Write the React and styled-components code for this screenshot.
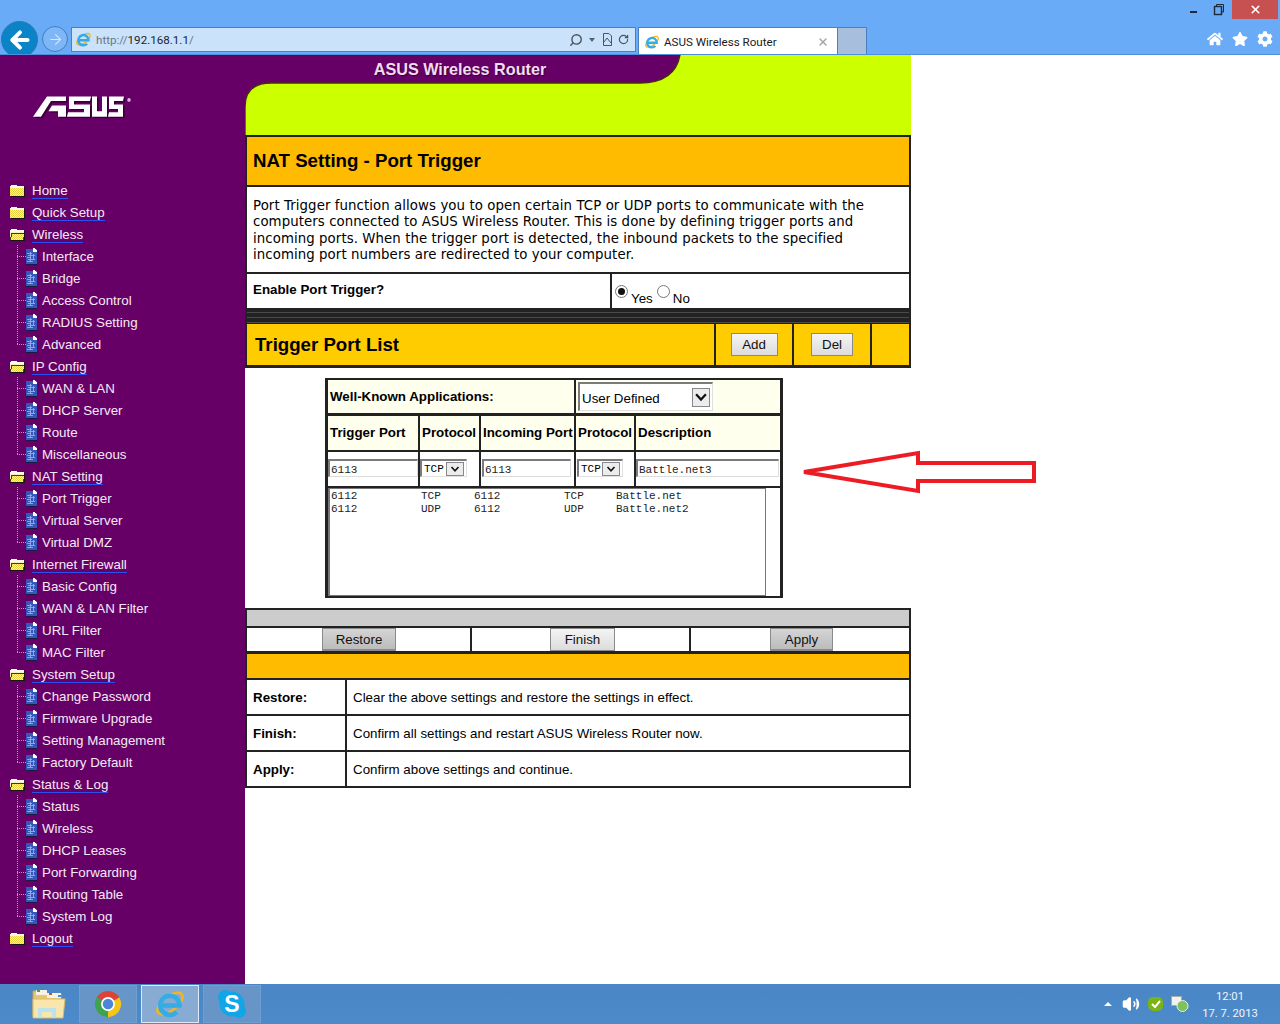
import styled, { createGlobalStyle } from 'styled-components';
import { ArrowLeft, ArrowRight, Search, RotateCw, X, Volume2 } from 'lucide-react';
import { FaHome, FaStar, FaCog } from 'react-icons/fa';

const GlobalStyle = createGlobalStyle`
  html, body {
    margin: 0;
    background: #fff;
    overflow: hidden;
  }
  * {
    box-sizing: border-box;
  }
`;

const Page = styled.div`
  position: relative;
  width: 1280px;
  height: 1024px;
  display: flex;
  flex-direction: column;
  overflow: hidden;
  font-family: 'Liberation Sans', Arial, sans-serif;
  font-size: 13.33px;
  color: #000;
`;

/* browser chrome */
const Chrome = styled.header`
  height: 55px;
  flex: none;
  background: #6aabf7;
  border-bottom: 1px solid #4d8fd8;
  overflow: hidden;
`;
const WindowBar = styled.div`
  height: 21px;
  display: flex;
  justify-content: flex-end;
  align-items: flex-start;
  padding-right: 2px;
`;
const WinButton = styled.div`
  width: ${(p) => p.$w}px;
  height: 19px;
  display: flex;
  align-items: center;
  justify-content: center;
  background: ${(p) => p.$bg || 'transparent'};
  color: #fff;
`;
const Minimize = styled.span`
  width: 7px;
  height: 2px;
  margin-top: 5px;
  background: #1c2a3a;
`;
const NavBar = styled.div`
  display: flex;
  align-items: flex-start;
  padding-left: 1px;
`;
const BackButton = styled.div`
  width: 37px;
  height: 37px;
  border-radius: 50%;
  background: #0a84c6;
  border: 1px solid #2f78b8;
  display: flex;
  align-items: center;
  justify-content: center;
  color: #fff;
`;
const ForwardButton = styled.div`
  width: 26px;
  height: 26px;
  margin: 5px 3px 0 4px;
  border-radius: 50%;
  background: #7fb6f5;
  border: 1px solid #3f7fc0;
  display: flex;
  align-items: center;
  justify-content: center;
  color: #d5e6fa;
`;
const AddressBar = styled.div`
  width: 565px;
  height: 25px;
  margin-top: 6px;
  display: flex;
  align-items: center;
  gap: 4px;
  padding: 0 6px 0 3px;
  background: #cbe2fb;
  border: 1px solid #4a80bd;
  font-family: Roboto, 'Liberation Sans', sans-serif;
  font-size: 11.6px;
  color: #6a7682;
`;
const Url = styled.span`
  flex: 1;
  b {
    font-weight: 400;
    color: #1a2530;
  }
`;
const AddressTool = styled.span`
  display: flex;
  align-items: center;
  color: #4a5560;
  margin-left: ${(p) => p.$gap || 0}px;
`;
const Caret = styled.span`
  width: 0;
  height: 0;
  border: 3px solid transparent;
  border-top: 4px solid #56616c;
  border-bottom: 0;
`;
const Tab = styled.div`
  width: 200px;
  height: 28px;
  margin: 6px 0 0 2px;
  display: flex;
  align-items: center;
  gap: 4px;
  padding: 0 8px 0 5px;
  background: #fff;
  border: 1px solid #4a80bd;
  border-bottom: 0;
  font-family: Roboto, 'Liberation Sans', sans-serif;
  font-size: 11.6px;
  color: #1a1a1a;
  span {
    flex: 1;
  }
`;
const NewTab = styled.div`
  width: 29px;
  height: 28px;
  margin-top: 6px;
  background: #a7bfdc;
  border: 1px solid #4a80bd;
  border-width: 1px 1px 0 0;
`;
const ToolIcons = styled.div`
  margin: 10px 7px 0 auto;
  display: flex;
  align-items: center;
  gap: 9px;
  color: #fff;
`;

/* page body */
const Main = styled.div`
  flex: 1;
  display: flex;
  min-height: 0;
`;
const Sidebar = styled.nav`
  width: 245px;
  flex: none;
  background: #660066;
`;
const LogoBox = styled.div`
  height: 124px;
  padding: 41px 0 0 33px;
`;
const NavRow = styled.div`
  height: 22px;
  display: flex;
  align-items: center;
  padding-left: ${(p) => (p.$child ? 17 : 9)}px;
  gap: ${(p) => (p.$child ? 5 : 6)}px;
  color: #f6e9f6;
  white-space: nowrap;
`;
const ParentLink = styled.a`
  margin-top: 2px;
  color: #f6e9f6;
  line-height: 15px;
  border-bottom: 1px solid #2a50f0;
`;

const Content = styled.main`
  width: 666px;
  flex: none;
`;
const Banner = styled.div`
  position: relative;
  height: 80px;
  svg {
    display: block;
  }
`;
const BannerTitle = styled.div`
  position: absolute;
  top: 5px;
  left: 0;
  width: 430px;
  text-align: center;
  font-size: 16.2px;
  font-weight: 700;
  color: #f2dcf2;
  text-shadow: 1px 1px 1px #3a003a;
`;
const Panel = styled.section`
  border: 2px solid #222;
  border-bottom: 0;
`;
const TitleRow = styled.div`
  height: 50px;
  display: flex;
  align-items: center;
  padding-left: 6px;
  background: #ffbb00;
  border-bottom: 2px solid #222;
  font-size: 18.67px;
  font-weight: 700;
`;
const Description = styled.p`
  height: 87px;
  margin: 0;
  padding: 11px 6px 0;
  border-bottom: 2px solid #222;
  font-family: 'DejaVu Sans', Verdana, sans-serif;
  font-size: 13.33px;
  line-height: 16.3px;
  letter-spacing: 0.07px;
  white-space: nowrap;
`;
const EnableRow = styled.div`
  height: 34px;
  display: grid;
  grid-template-columns: 365px 1fr;
`;
const EnableLabel = styled.div`
  padding: 8px 0 0 6px;
  border-right: 2px solid #222;
  font-weight: 700;
`;
const EnableOptions = styled.div`
  display: flex;
  align-items: flex-start;
  padding: 11px 0 0 3px;
`;
const Radio = styled.input.attrs({ type: 'radio', readOnly: true })`
  appearance: none;
  width: 13px;
  height: 13px;
  margin: 0 3px 0 ${(p) => p.$gap || 0}px;
  border: 1px solid #777;
  border-radius: 50%;
  background: #fff;
  display: flex;
  align-items: center;
  justify-content: center;
  &:checked::after {
    content: '';
    width: 7px;
    height: 7px;
    border-radius: 50%;
    background: #111;
  }
`;
const RadioText = styled.span`
  margin-top: 6px;
`;
const Stripes = styled.div`
  height: 16px;
  background: repeating-linear-gradient(#222 0 4px, #4a4a4a 4px 5px);
`;
const ListHeader = styled.div`
  height: 44px;
  display: grid;
  grid-template-columns: 467px 78px 78px 1fr;
  background: #ffcc00;
  border-bottom: 3px solid #222;
`;
const HeaderCell = styled.div`
  display: flex;
  align-items: center;
  justify-content: ${(p) => (p.$title ? 'flex-start' : 'center')};
  padding-left: ${(p) => (p.$title ? 8 : 0)}px;
  border-left: ${(p) => (p.$title ? 0 : 2)}px solid #222;
  font-size: ${(p) => (p.$title ? 18.67 : 13.33)}px;
  font-weight: ${(p) => (p.$title ? 700 : 400)};
`;
const FormButton = styled.button`
  height: ${(p) => p.$h}px;
  width: ${(p) => p.$w}px;
  padding: 0;
  font: 13.33px 'Liberation Sans', Arial, sans-serif;
  color: #111;
  border: 1px solid #8a8a8a;
  border-bottom-width: ${(p) => (p.$dark ? 2 : 1)}px;
  background: ${(p) =>
    p.$dark
      ? 'linear-gradient(#d4d4d4, #bcbcbc)'
      : 'linear-gradient(#f4f4f4, #dcdcdc)'};
`;

const PortTable = styled.div`
  width: 458px;
  margin: 10px 0 0 80px;
  display: grid;
  grid-template-columns: 92px 61px 95px 60px 144px;
  border: 3px solid #222;
  border-top-width: 2px;
  border-bottom-width: 2px;
`;
const Cell = styled.div`
  grid-column: span ${(p) => p.$span || 1};
  height: ${(p) => p.$h}px;
  display: flex;
  align-items: center;
  padding-left: ${(p) => p.$pad ?? 2}px;
  padding-bottom: ${(p) => p.$lift || 0}px;
  background: ${(p) => p.$bg || '#fff'};
  border-right: ${(p) => (p.$last ? 0 : 2)}px solid #222;
  border-bottom: ${(p) => p.$under || 2}px solid #222;
  font-weight: ${(p) => (p.$bold ? 700 : 400)};
  white-space: nowrap;
`;
const TextBox = styled.input.attrs({ readOnly: true })`
  width: ${(p) => p.$w}px;
  height: 18px;
  margin-top: -2px;
  padding: 2px 0 0 1px;
  font: 11px 'Liberation Mono', monospace;
  color: #222;
  background: #fff;
  border: 1px solid #dcdcdc;
  border-top: 2px solid #7b7b7b;
  border-left: 2px solid #7b7b7b;
  outline: none;
`;
const SelectBox = styled.div`
  width: ${(p) => p.$w}px;
  height: ${(p) => p.$h}px;
  margin-top: ${(p) => p.$top || 0}px;
  display: flex;
  align-items: center;
  justify-content: space-between;
  padding: 0 2px 0 2px;
  background: #fff;
  border: 1px solid #e0e0e0;
  border-top: 2px solid #7b7b7b;
  border-left: 2px solid #7b7b7b;
  font: ${(p) => (p.$mono ? "11px 'Liberation Mono', monospace" : "13.33px 'Liberation Sans', Arial, sans-serif")};
`;
const SelectLabel = styled.span`
  margin-top: 2px;
`;
const SelectArrow = styled.span`
  width: ${(p) => p.$w}px;
  height: ${(p) => p.$h}px;
  display: flex;
  align-items: center;
  justify-content: center;
  background: #ececec;
  border: 1px solid #888;
`;
const ListBox = styled.div`
  grid-column: span 5;
  height: 108px;
  width: 438px;
  padding-top: 1px;
  border: 1px solid #777;
  border-left-width: 2px;
  font: 11px/13px 'Liberation Mono', monospace;
  color: #222;
  display: flex;
  flex-direction: column;
`;
const ListRow = styled.div`
  display: grid;
  grid-template-columns: 90px 53px 90px 52px 1fr;
  padding-left: 1px;
`;

const BottomPanel = styled.section`
  margin-top: 10px;
  border: 2px solid #222;
  border-top-width: 2px;
`;
const GrayBar = styled.div`
  height: 18px;
  background: #cccccc;
  border-bottom: 2px solid #222;
`;
const ButtonRow = styled.div`
  height: 26px;
  display: grid;
  grid-template-columns: 223px 219px 1fr;
  border-bottom: 3px solid #222;
`;
const ButtonCell = styled.div`
  padding-left: ${(p) => p.$pad}px;
  border-left: ${(p) => (p.$first ? 0 : 2)}px solid #222;
`;
const OrangeBar = styled.div`
  height: 26px;
  background: #ffbb00;
  border-bottom: 2px solid #222;
`;
const HelpRow = styled.div`
  height: ${(p) => (p.$last ? 34 : 36)}px;
  display: grid;
  grid-template-columns: 100px 1fr;
  border-bottom: ${(p) => (p.$last ? 0 : 2)}px solid #222;
`;
const HelpLabel = styled.div`
  display: flex;
  align-items: center;
  padding-left: 6px;
  border-right: 2px solid #222;
  font-weight: 700;
`;
const HelpText = styled.div`
  display: flex;
  align-items: center;
  padding-left: 6px;
`;

const Annotation = styled.svg`
  position: absolute;
  left: 800px;
  top: 448px;
`;

/* taskbar */
const Taskbar = styled.footer`
  height: 40px;
  flex: none;
  display: flex;
  align-items: center;
  background: linear-gradient(#4a86c6, #4c8aca);
  padding-left: 22px;
`;
const TaskItem = styled.div`
  width: ${(p) => (p.$plain ? 53 : 58)}px;
  height: 38px;
  margin-right: 4px;
  display: flex;
  align-items: center;
  justify-content: center;
  border: 1px solid ${(p) => (p.$active ? '#dfeaf6' : p.$plain ? 'transparent' : '#6f9fd2')};
  background: ${(p) => (p.$active ? '#87abd2' : p.$plain ? 'transparent' : '#6795c8')};
`;
const Tray = styled.div`
  margin-left: auto;
  display: flex;
  align-items: center;
  color: #fff;
`;
const TrayTriangle = styled.span`
  width: 0;
  height: 0;
  margin-right: 10px;
  border: 4px solid transparent;
  border-bottom: 4px solid #fff;
  border-top: 0;
`;
const Clock = styled.div`
  width: 76px;
  margin: 0 12px 0 3px;
  padding-top: 1px;
  text-align: center;
  font-family: Roboto, 'Liberation Sans', sans-serif;
  font-size: 11.2px;
  line-height: 17px;
  color: #f2f6fb;
`;

function IeIcon({ size = 16 }) {
  return (
    <svg width={size} height={size} viewBox="0 0 32 32" style={{ flex: 'none' }}>
      <ellipse cx="16" cy="15.5" rx="15" ry="7" fill="none" stroke="#f3b51c" strokeWidth="2.6" transform="rotate(-38 16 15.5)" />
      <path d="M7 17.5H25.5A9.6 9.6 0 1 0 22.8 24" fill="none" stroke="#35ace6" strokeWidth="4.6" />
    </svg>
  );
}

function Folder({ open }) {
  return (
    <svg width="17" height="14" viewBox="0 0 17 14" shapeRendering="crispEdges">
      <defs>
        <pattern id="dither" width="2" height="2" patternUnits="userSpaceOnUse">
          <rect width="2" height="2" fill="#ffff66" />
          <rect width="1" height="1" fill="#e8d040" />
          <rect x="1" y="1" width="1" height="1" fill="#e8d040" />
        </pattern>
      </defs>
      <path d="M2 2H7L8 3H15V13H1V3Z" fill={open ? '#f4eed0' : 'url(#dither)'} />
      <path d="M2 2H7L8 3H15V5H1V3Z" fill="#fffbe8" />
      {open && <path d="M1 13L3 6H16L14 13Z" fill="url(#dither)" stroke="#111" strokeWidth="0.8" />}
      <path d="M15.5 4V13.5H2" fill="none" stroke="#161616" strokeWidth="1" />
    </svg>
  );
}

function TreeDoc({ last }) {
  return (
    <svg width="20" height="22" viewBox="0 0 20 22" style={{ flex: 'none' }} shapeRendering="crispEdges">
      <path d={`M0.5 0V${last ? 11 : 22}M0 11.5H9`} stroke="#b49ab4" strokeDasharray="1 1" fill="none" />
      <rect x="9" y="4" width="11" height="15" fill="#3558b8" />
      <path d="M10 8H15M11 10H18M10 12H14M11 14H18M10 16H16M13 7V17M16 9V15" stroke="#9fb4ea" strokeWidth="0.8" fill="none" />
      <path d="M16 3H17L20 6V7H16Z" fill="#fff" />
      <path d="M9 19H20" stroke="#1a1a40" />
    </svg>
  );
}

const ASUS_MARK = [
  'M0 19L14 1H33V5H18L8 19Z',
  'M19 9H33V19H25V14H15.5Z',
  'M36 1H58L57 5H41V8H57V19H34L35 15H51V12H36Z',
  'M59 1H64V14H69V1H74V19H59Z',
  'M76 1H91L90 5H81V8H90V19H75L76 15H85V12H76Z',
];

function AsusLogo() {
  return (
    <svg width="100" height="22" viewBox="0 0.5 100 19.5" preserveAspectRatio="none">
      <path d={ASUS_MARK.join(' ')} fill="#330033" transform="translate(1.5 1.2)" />
      <path d={ASUS_MARK.join(' ')} fill="#fff" />
      <circle cx="96" cy="4" r="1.7" fill="#d9b8d9" />
    </svg>
  );
}

function ChromeLogo() {
  return (
    <svg width="30" height="30" viewBox="0 0 32 32">
      <path d="M16 16L3.88 9A14 14 0 0 1 28.12 9Z" fill="#dc4437" />
      <path d="M16 16L28.12 9A14 14 0 0 1 16 30Z" fill="#f5c518" />
      <path d="M16 16L16 30A14 14 0 0 1 3.88 9Z" fill="#3ea34f" />
      <circle cx="16" cy="16" r="7.4" fill="#fff" />
      <circle cx="16" cy="16" r="5.6" fill="#4d86d8" />
    </svg>
  );
}

function ExplorerIcon() {
  return (
    <svg width="34" height="30" viewBox="0 0 34 30">
      <path d="M1 2H13L15 5H29V27H1Z" fill="#e9c66c" stroke="#c4a050" />
      <rect x="4" y="1" width="11" height="5" fill="#f6f3e6" />
      <rect x="5" y="1" width="3" height="2" fill="#3ca54c" />
      <rect x="15" y="4" width="14" height="5" fill="#f6f3e6" />
      <rect x="17" y="4" width="3" height="2" fill="#d84a3a" />
      <rect x="26" y="6" width="3" height="2" fill="#4a8ad8" />
      <path d="M1 10H33L31 29H1Z" fill="#f8e6ac" stroke="#d8bc70" />
      <path d="M6 29V19H24V29H20V23H10V29Z" fill="#b5e2f2" opacity="0.9" />
    </svg>
  );
}

function SkypeIcon() {
  return (
    <svg width="30" height="30" viewBox="0 0 30 30">
      <circle cx="8" cy="8" r="7" fill="#12a5e8" />
      <circle cx="22" cy="22" r="7" fill="#12a5e8" />
      <circle cx="15" cy="15" r="12.5" fill="#12a5e8" />
      <text x="15" y="23" textAnchor="middle" fontFamily="Liberation Sans" fontWeight="700" fontSize="23" fill="#fff">S</text>
    </svg>
  );
}

function Chevron({ size = 10 }) {
  return (
    <svg width={size} height={size} viewBox="0 0 10 10">
      <path d="M1.5 3L5 6.8L8.5 3" fill="none" stroke="#111" strokeWidth="1.6" />
    </svg>
  );
}

const MENU = [
  { label: 'Home' },
  { label: 'Quick Setup' },
  { label: 'Wireless', items: ['Interface', 'Bridge', 'Access Control', 'RADIUS Setting', 'Advanced'] },
  { label: 'IP Config', items: ['WAN & LAN', 'DHCP Server', 'Route', 'Miscellaneous'] },
  { label: 'NAT Setting', items: ['Port Trigger', 'Virtual Server', 'Virtual DMZ'] },
  { label: 'Internet Firewall', items: ['Basic Config', 'WAN & LAN Filter', 'URL Filter', 'MAC Filter'] },
  { label: 'System Setup', items: ['Change Password', 'Firmware Upgrade', 'Setting Management', 'Factory Default'] },
  { label: 'Status & Log', items: ['Status', 'Wireless', 'DHCP Leases', 'Port Forwarding', 'Routing Table', 'System Log'] },
  { label: 'Logout' },
];

const PORTS = [
  ['6112', 'TCP', '6112', 'TCP', 'Battle.net'],
  ['6112', 'UDP', '6112', 'UDP', 'Battle.net2'],
];

const HELP = [
  ['Restore:', 'Clear the above settings and restore the settings in effect.'],
  ['Finish:', 'Confirm all settings and restart ASUS Wireless Router now.'],
  ['Apply:', 'Confirm above settings and continue.'],
];

const CREAM = '#ffffee';

export default function App() {
  return (
    <Page>
      <GlobalStyle />
      <Chrome>
        <WindowBar>
          <WinButton $w={26}>
            <Minimize />
          </WinButton>
          <WinButton $w={26}>
            <svg width="12" height="12" viewBox="0 0 12 12">
              <path d="M3.5 2.5V0.5H10.5V8H8.5" fill="none" stroke="#1c2a3a" />
              <rect x="1.5" y="2.5" width="7" height="8" fill="none" stroke="#1c2a3a" strokeWidth="1.4" />
            </svg>
          </WinButton>
          <WinButton $w={46} $bg="#c75050">
            <X size={13} strokeWidth={3} />
          </WinButton>
        </WindowBar>
        <NavBar>
          <BackButton>
            <ArrowLeft size={26} strokeWidth={3.6} />
          </BackButton>
          <ForwardButton>
            <ArrowRight size={17} strokeWidth={1.5} />
          </ForwardButton>
          <AddressBar>
            <IeIcon size={17} />
            <Url>
              http://<b>192.168.1.1</b>/
            </Url>
            <AddressTool>
              <Search size={14} strokeWidth={2.4} style={{ transform: 'scaleX(-1)' }} />
            </AddressTool>
            <AddressTool $gap={2}>
              <Caret />
            </AddressTool>
            <AddressTool $gap={4}>
              <svg width="9" height="13" viewBox="0 0 9 13">
                <path d="M0.5 0.5H6L8.5 3V12.5H0.5Z M1 9L4 5L8 10" fill="none" stroke="#4a5560" />
              </svg>
            </AddressTool>
            <AddressTool $gap={2}>
              <RotateCw size={11} strokeWidth={2.6} />
            </AddressTool>
          </AddressBar>
          <Tab>
            <IeIcon />
            <span>ASUS Wireless Router</span>
            <X size={12} strokeWidth={3} color="#a8a8a8" />
          </Tab>
          <NewTab />
          <ToolIcons>
            <FaHome size={16} />
            <FaStar size={16} />
            <FaCog size={16} />
          </ToolIcons>
        </NavBar>
      </Chrome>

      <Main>
        <Sidebar>
          <LogoBox>
            <AsusLogo />
          </LogoBox>
          {MENU.map((group) => (
            <div key={group.label}>
              <NavRow>
                <Folder open={Boolean(group.items)} />
                <ParentLink>{group.label}</ParentLink>
              </NavRow>
              {group.items &&
                group.items.map((item, i) => (
                  <NavRow $child key={item}>
                    <TreeDoc last={i === group.items.length - 1} />
                    {item}
                  </NavRow>
                ))}
            </div>
          ))}
        </Sidebar>

        <Content>
          <Banner>
            <svg width="666" height="80" viewBox="0 0 666 80">
              <rect width="666" height="80" fill="#660066" />
              <path d="M0 80V52Q0 28 26 28H395Q430 28 435 0H666V80Z" fill="#ccff00" />
              <path d="M0 80V52Q0 28 26 28H395Q430 28 435 0" fill="none" stroke="#4a2c18" strokeWidth="1.4" />
            </svg>
            <BannerTitle>ASUS Wireless Router</BannerTitle>
          </Banner>

          <Panel>
            <TitleRow>NAT Setting - Port Trigger</TitleRow>
            <Description>
              Port Trigger function allows you to open certain TCP or UDP ports to communicate with the
              <br />
              computers connected to ASUS Wireless Router. This is done by defining trigger ports and
              <br />
              incoming ports. When the trigger port is detected, the inbound packets to the specified
              <br />
              incoming port numbers are redirected to your computer.
            </Description>
            <EnableRow>
              <EnableLabel>Enable Port Trigger?</EnableLabel>
              <EnableOptions>
                <Radio name="enable" defaultChecked />
                <RadioText>Yes</RadioText>
                <Radio name="enable" $gap={4} />
                <RadioText>No</RadioText>
              </EnableOptions>
            </EnableRow>
            <Stripes />
            <ListHeader>
              <HeaderCell $title>Trigger Port List</HeaderCell>
              <HeaderCell>
                <FormButton $w={47} $h={23}>Add</FormButton>
              </HeaderCell>
              <HeaderCell>
                <FormButton $w={42} $h={23}>Del</FormButton>
              </HeaderCell>
              <HeaderCell />
            </ListHeader>
          </Panel>

          <PortTable>
            <Cell $span={3} $h={36} $under={3} $bg={CREAM} $bold>Well-Known Applications:</Cell>
            <Cell $span={2} $h={36} $under={3} $bg={CREAM} $last>
              <SelectBox $w={135} $h={29}>
                <SelectLabel>User Defined</SelectLabel>
                <SelectArrow $w={18} $h={19}>
                  <Chevron size={14} />
                </SelectArrow>
              </SelectBox>
            </Cell>
            <Cell $h={36} $lift={2} $bg={CREAM} $bold>Trigger Port</Cell>
            <Cell $h={36} $lift={2} $bg={CREAM} $bold>Protocol</Cell>
            <Cell $h={36} $lift={2} $bg={CREAM} $bold>Incoming Port</Cell>
            <Cell $h={36} $lift={2} $bg={CREAM} $bold>Protocol</Cell>
            <Cell $h={36} $lift={2} $bg={CREAM} $bold $last>Description</Cell>
            <Cell $h={36} $pad={0}>
              <TextBox $w={90} value="6113" />
            </Cell>
            <Cell $h={36} $pad={0}>
              <SelectBox $w={47} $h={18} $top={-2} $mono>
                TCP
                <SelectArrow $w={18} $h={14}>
                  <Chevron />
                </SelectArrow>
              </SelectBox>
            </Cell>
            <Cell $h={36} $pad={1}>
              <TextBox $w={89} value="6113" />
            </Cell>
            <Cell $h={36} $pad={1}>
              <SelectBox $w={46} $h={18} $top={-2} $mono>
                TCP
                <SelectArrow $w={18} $h={14}>
                  <Chevron />
                </SelectArrow>
              </SelectBox>
            </Cell>
            <Cell $h={36} $last $pad={0}>
              <TextBox $w={143} value="Battle.net3" />
            </Cell>
            <ListBox>
              {PORTS.map((row) => (
                <ListRow key={row[4]}>
                  {row.map((value, i) => (
                    <span key={i}>{value}</span>
                  ))}
                </ListRow>
              ))}
            </ListBox>
          </PortTable>

          <BottomPanel>
            <GrayBar />
            <ButtonRow>
              <ButtonCell $first $pad={75}>
                <FormButton $dark $w={74} $h={23}>Restore</FormButton>
              </ButtonCell>
              <ButtonCell $pad={78}>
                <FormButton $w={65} $h={23}>Finish</FormButton>
              </ButtonCell>
              <ButtonCell $pad={79}>
                <FormButton $dark $w={63} $h={23}>Apply</FormButton>
              </ButtonCell>
            </ButtonRow>
            <OrangeBar />
            {HELP.map(([label, text], i) => (
              <HelpRow key={label} $last={i === HELP.length - 1}>
                <HelpLabel>{label}</HelpLabel>
                <HelpText>{text}</HelpText>
              </HelpRow>
            ))}
          </BottomPanel>
        </Content>
      </Main>

      <Annotation width="240" height="48" viewBox="0 0 240 48">
        <path d="M4 24L118 5V15H234V33H118V43Z" fill="none" stroke="#ed1c24" strokeWidth="4" />
      </Annotation>

      <Taskbar>
        <TaskItem $plain>
          <ExplorerIcon />
        </TaskItem>
        <TaskItem>
          <ChromeLogo />
        </TaskItem>
        <TaskItem $active>
          <IeIcon size={32} />
        </TaskItem>
        <TaskItem>
          <SkypeIcon />
        </TaskItem>
        <Tray>
          <TrayTriangle />
          <Volume2 size={18} fill="#fff" />
          <svg width="18" height="16" viewBox="0 0 18 16" style={{ marginLeft: 7 }}>
            <rect x="1" y="1" width="15" height="14" rx="5" fill="#7ab317" />
            <path d="M5 8L8 11L13 5" fill="none" stroke="#fff" strokeWidth="2" />
          </svg>
          <svg width="18" height="18" viewBox="0 0 18 18" style={{ marginLeft: 6 }}>
            <rect x="0.5" y="1.5" width="10" height="9" fill="#f2f2f2" stroke="#aaa" />
            <circle cx="11.5" cy="11" r="5.5" fill="#7fc15a" stroke="#e5f2da" />
          </svg>
          <Clock>
            12:01
            <br />
            17. 7. 2013
          </Clock>
        </Tray>
      </Taskbar>
    </Page>
  );
}
